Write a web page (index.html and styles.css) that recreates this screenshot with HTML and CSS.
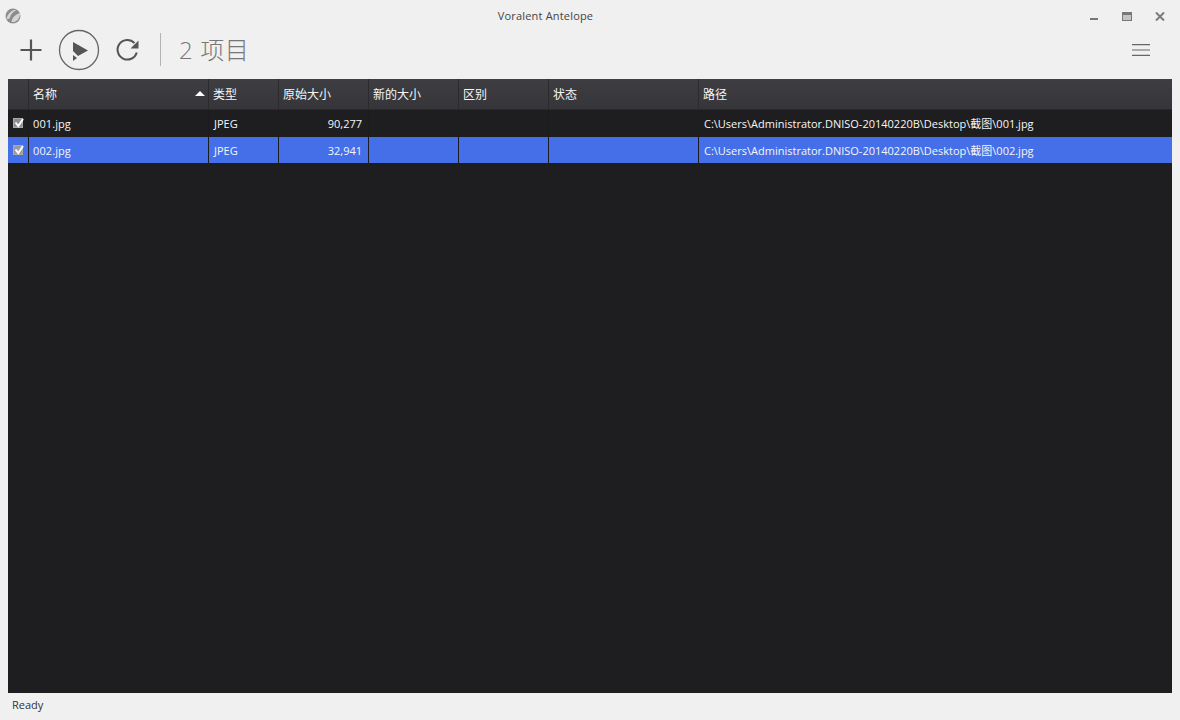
FILE: index.html
```html
<!DOCTYPE html>
<html lang="zh">
<head>
<meta charset="utf-8">
<title>Voralent Antelope</title>
<link rel="stylesheet" href="styles.css">
</head>
<body>
<div class="app">
  <header class="titlebar">
    <svg class="logo" width="16" height="16" viewBox="0 0 16 16"><circle cx="8" cy="8" r="7.500" fill="#8c8c8c"/><path d="M1.500 11.500C2 6.500 6 1.500 12.500 1.500C8.500 3 5.500 6 4.500 10.500ZM6.500 14C7 10 10 6.500 15 5C15.500 10.500 11 15 6.500 14Z" fill="#d4d4d4"/></svg>
    <div class="title">Voralent Antelope</div>
    <div class="winbtns">
      <svg class="win-min" width="8" height="9" viewBox="0 0 8 9"><rect x="0" y="6" width="8" height="2" fill="#777"/></svg>
      <svg class="win-max" width="10" height="9" viewBox="0 0 10 9"><rect x="0.500" y="0.500" width="9" height="8" fill="#c4c4c4" stroke="#777"/><rect x="0" y="0" width="10" height="3" fill="#777"/></svg>
      <svg width="10" height="9" viewBox="0 0 10 9"><path d="M1 0.500L9 8.500M9 0.500L1 8.500" stroke="#7a7a7a" stroke-width="2"/></svg>
    </div>
  </header>
  <div class="toolbar">
    <svg class="ic-add" width="24" height="24" viewBox="0 0 24 24"><path d="M12 1.500V22.500M1.500 12H22.500" stroke="#555" stroke-width="2.200"/></svg>
    <svg class="ic-run" width="42" height="42" viewBox="0 0 42 42"><circle cx="21" cy="21" r="19.500" fill="none" stroke="#666" stroke-width="1.300"/><path d="M15 13L30 21.500L20 27L15 22Z" fill="#555"/><path d="M15 26L19 29L15 32Z" fill="#555"/></svg>
    <svg class="ic-refresh" width="26" height="26" viewBox="0 0 26 26"><path d="M21.800 15.500A9.800 9.800 0 1 1 19.500 6" fill="none" stroke="#555" stroke-width="2"/><path d="M23.500 3.500V11.500H15.500Z" fill="#555"/></svg>
    <div class="sep"></div>
    <div class="count">2 项目</div>
    <svg class="menu" width="18" height="12" viewBox="0 0 18 12"><path d="M0 0.700H18M0 6H18M0 11.300H18" stroke="#666" stroke-width="1.200"/></svg>
  </div>
  <main class="table">
    <div class="row head">
      <div class="cell"></div>
      <div class="cell name">名称<span class="arrow"></span></div>
      <div class="cell">类型</div>
      <div class="cell">原始大小</div>
      <div class="cell">新的大小</div>
      <div class="cell">区别</div>
      <div class="cell">状态</div>
      <div class="cell">路径</div>
    </div>
    <div class="row item first">
      <div class="cell"><span class="check"><svg width="10" height="10" viewBox="0 0 10 10"><path d="M1.500 4.500L4.300 8L9 1" fill="none" stroke="#fff" stroke-width="2"/></svg></span></div>
      <div class="cell file">001.jpg</div>
      <div class="cell">JPEG</div>
      <div class="cell num">90,277</div>
      <div class="cell"></div>
      <div class="cell"></div>
      <div class="cell"></div>
      <div class="cell">C:\Users\Administrator.DNISO-20140220B\Desktop\截图\001.jpg</div>
    </div>
    <div class="row item selected">
      <div class="cell"><span class="check"><svg width="10" height="10" viewBox="0 0 10 10"><path d="M1.500 4.500L4.300 8L9 1" fill="none" stroke="#fff" stroke-width="2"/></svg></span></div>
      <div class="cell file">002.jpg</div>
      <div class="cell">JPEG</div>
      <div class="cell num">32,941</div>
      <div class="cell"></div>
      <div class="cell"></div>
      <div class="cell"></div>
      <div class="cell">C:\Users\Administrator.DNISO-20140220B\Desktop\截图\002.jpg</div>
    </div>
  </main>
  <footer class="status">Ready</footer>
</div>
</body>
</html>
```
FILE: styles.css
```css
* { box-sizing: border-box; }
html, body { margin: 0; height: 100%; }
body {
  background: #f0f0f0;
  font-family: "Open Sans", "Noto Sans CJK SC", sans-serif;
  overflow: hidden;
}
.app { display: flex; flex-direction: column; height: 720px; }
.titlebar {
  height: 29px;
  flex: none;
  display: flex;
  align-items: flex-start;
  padding: 8px 15px 0 5px;
}
.logo { flex: none; }
.title {
  flex: 1;
  text-align: center;
  font-size: 11px;
  letter-spacing: 0.180px;
  line-height: 16px;
  color: #444;
  padding-right: 20px;
}
.winbtns { display: flex; gap: 24px; align-items: center; height: 16px; width: 75px; }
.win-max { margin-right: -1px; }
.toolbar {
  height: 50px;
  flex: none;
  display: flex;
  align-items: center;
  padding: 0 30px 9px 19px;
}
.ic-add { margin-right: 15px; }
.ic-run { margin-right: 15px; }
.ic-refresh { margin-right: 19px; }
.sep { width: 1px; height: 33px; background: #b4b4b4; margin-right: 18px; }
.count {
  font-size: 24px;
  letter-spacing: 0.600px;
  line-height: 30px;
  font-weight: 300;
  color: #777;
  flex: 1;
}
.table {
  flex: 1;
  margin: 0 8px;
  background: #1e1e20;
  min-height: 0;
}
.row {
  display: grid;
  grid-template-columns: 21px 180px 70px 90px 90px 90px 150px 1fr;
}
.cell {
  font-size: 11px;
  color: #f6f6f6;
  white-space: nowrap;
  overflow: hidden;
  display: flex;
  align-items: center;
  padding-left: 5px;
  border-right: 1px solid #1c1c20;
}
.head {
  height: 31px;
  background: linear-gradient(#3e3e42, #36363a);
  border-bottom: 1px solid #2a2a2d;
}
.head .cell { font-size: 12px; padding-left: 4px; border-right: 1px solid #2b2b2e; }
.head .cell:last-child { border-right: none; }
.name { position: relative; }
.arrow {
  position: absolute;
  right: 3px;
  top: 12px;
  border-left: 5px solid transparent;
  border-right: 5px solid transparent;
  border-bottom: 5px solid #fff;
}
.item { height: 26px; }
.item.first { height: 27px; padding-bottom: 1px; }
.item .cell:last-child { border-right: none; padding-left: 5px; }
.item .file { padding-left: 4px; letter-spacing: 0.100px; }
.selected { background: #446fe8; }
.num { justify-content: flex-end; padding-right: 6px; }
.item .cell:first-child { padding-left: 5px; }
.check {
  width: 10px;
  height: 10px;
  background: #8d8d8f;
  border: 1px solid #aaa;
  display: block;
  line-height: 0;
  margin-bottom: 1px;
}
.check svg { display: block; margin: -1px 0 0 0; }
.selected .check { background: #9a9aa0; }
.status {
  height: 27px;
  flex: none;
  font-size: 11px;
  line-height: 24px;
  color: #333;
  padding-left: 12px;
}
```
